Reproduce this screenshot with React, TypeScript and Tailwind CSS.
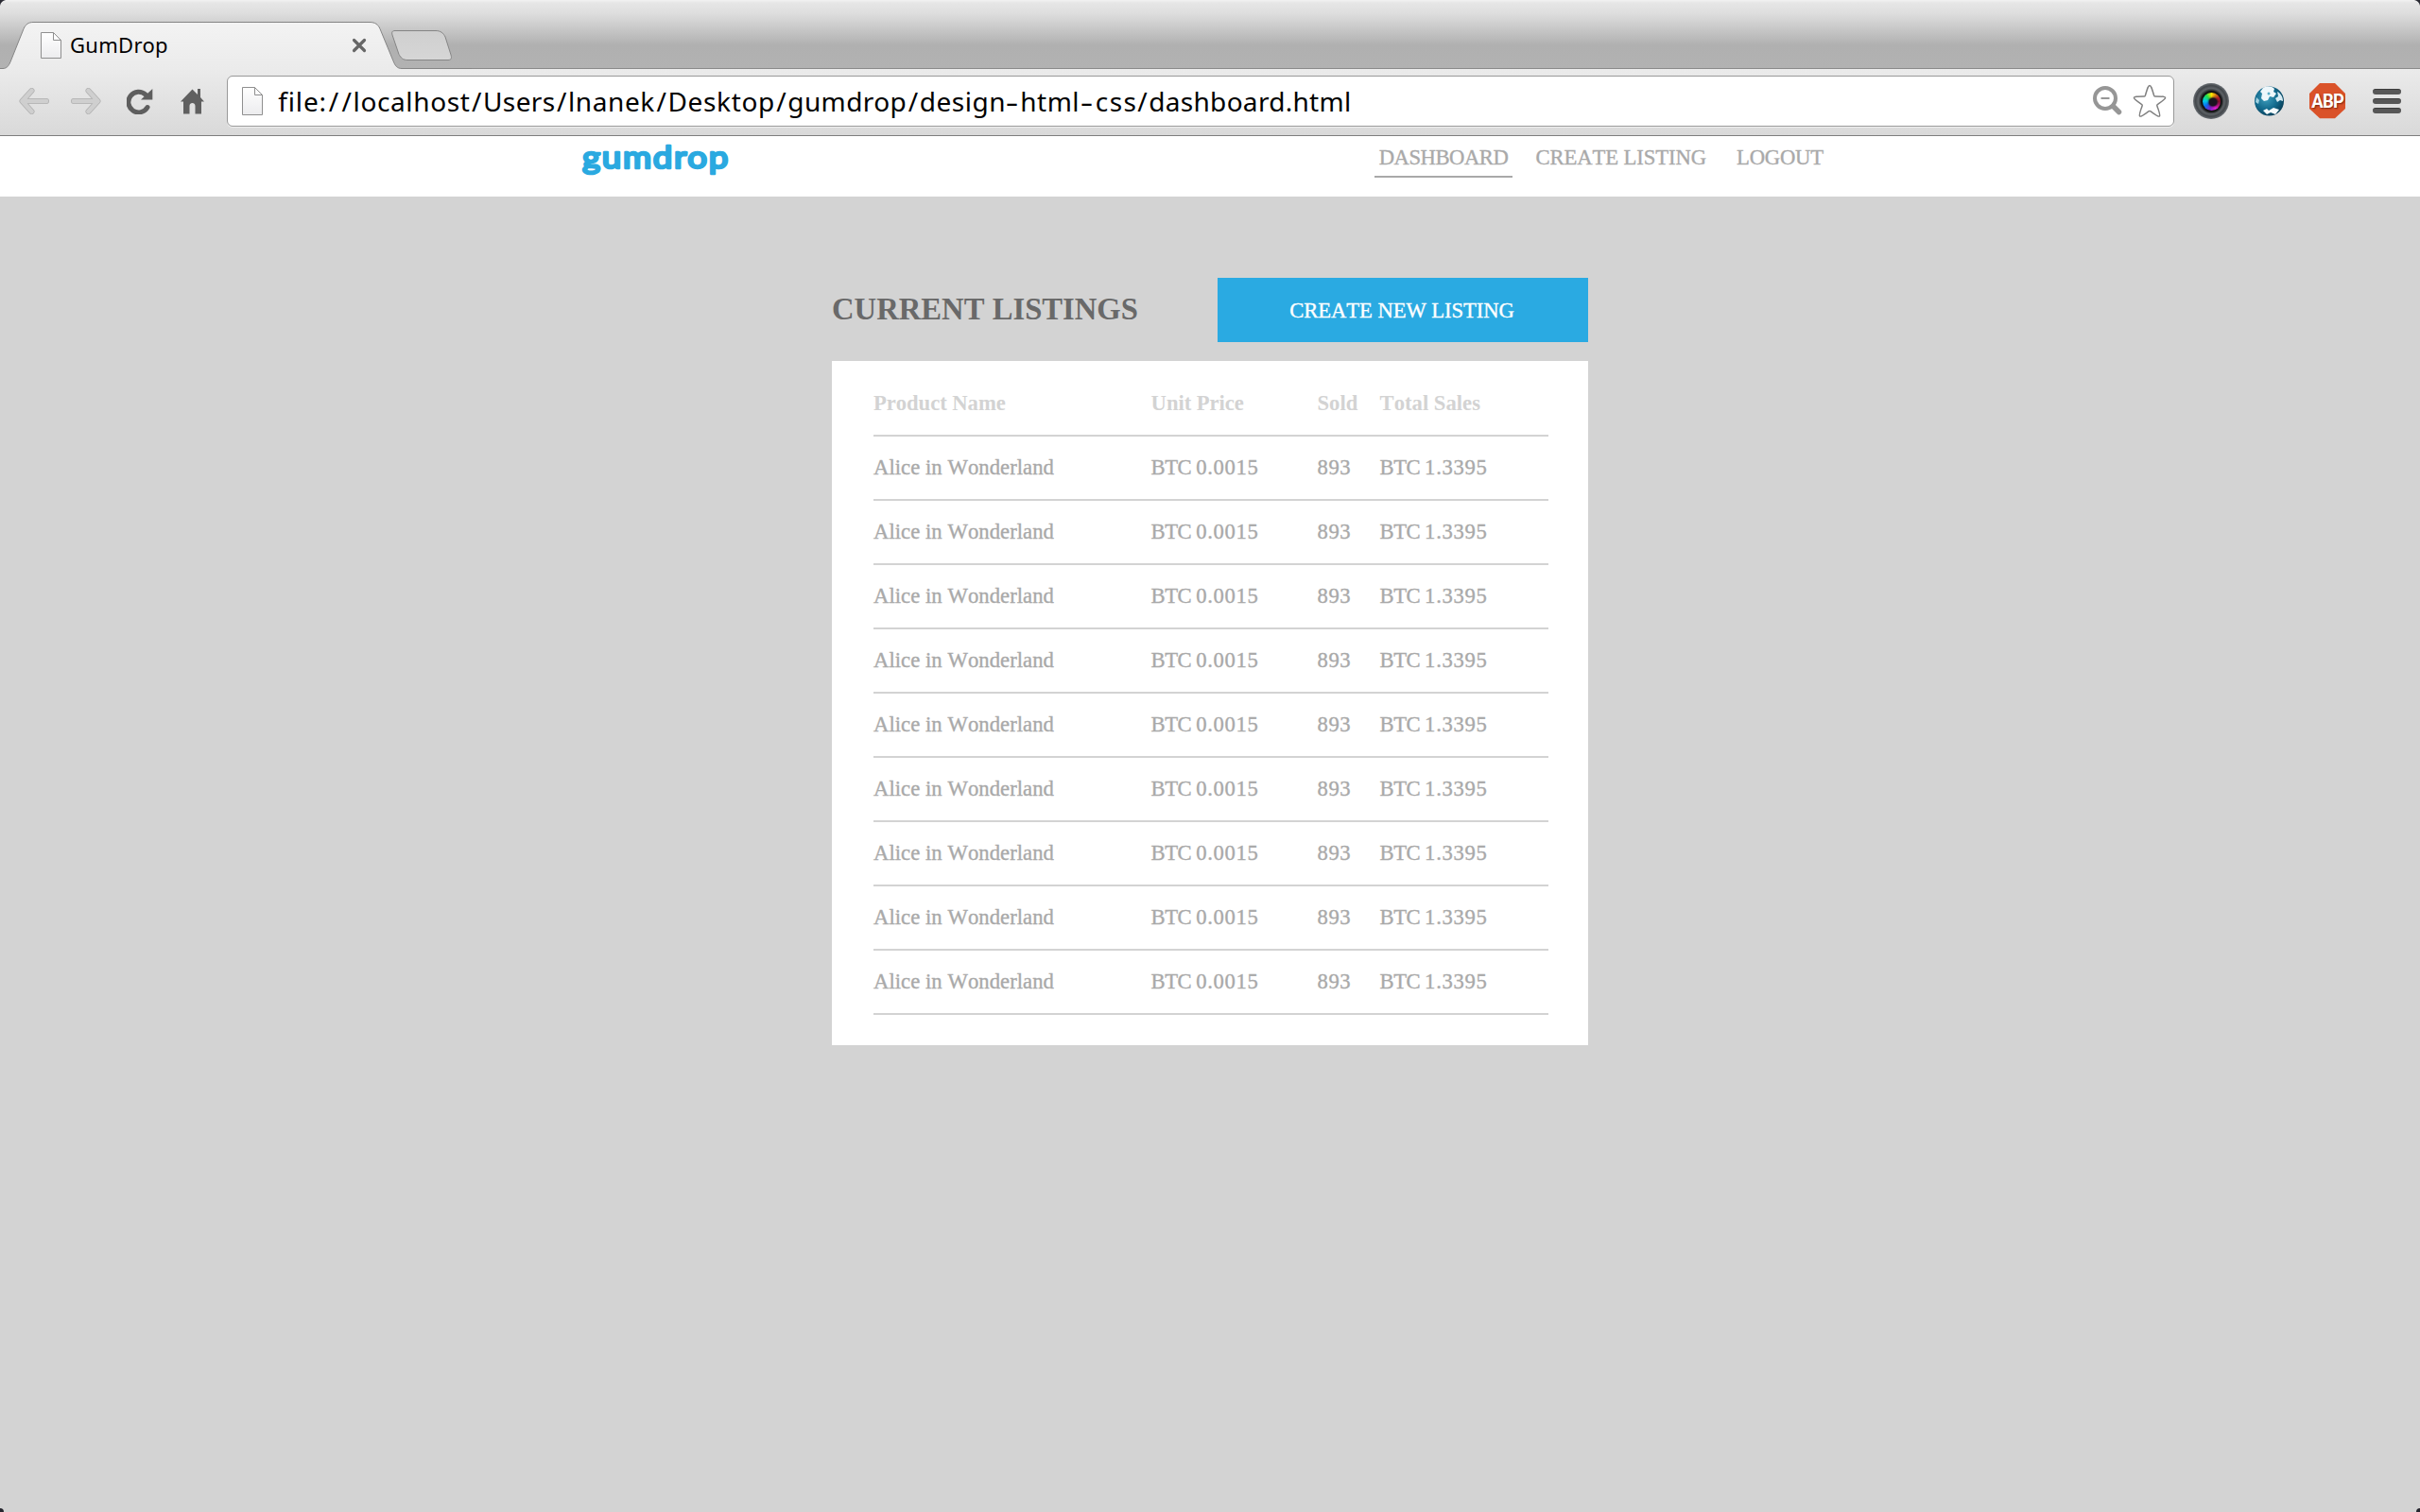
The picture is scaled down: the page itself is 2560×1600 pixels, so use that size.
const urlParts: { text: string; cls: string }[] = [
  { text: 'file:', cls: 'w-[51.7px] tracking-[0.86px]' },
  { text: '/', cls: 'w-[13.8px] text-center' },
  { text: '/', cls: 'w-[13.8px] text-center' },
  { text: 'localhost', cls: 'w-[123.9px] tracking-[0.62px]' },
  { text: '/', cls: 'w-[13.5px] text-center' },
  { text: 'Users', cls: 'w-[76.5px] tracking-[0.4px]' },
  { text: '/', cls: 'w-[13.5px] text-center' },
  { text: 'lnanek', cls: 'w-[92px] tracking-[0.6px]' },
  { text: '/', cls: 'w-[13.5px] text-center' },
  { text: 'Desktop', cls: 'w-[113.3px] tracking-[0.65px]' },
  { text: '/', cls: 'w-[13.5px] text-center' },
  { text: 'gumdrop', cls: 'w-[126px] tracking-[0.4px]' },
  { text: '/', cls: 'w-[13.5px] text-center' },
  { text: 'design', cls: 'w-[89.5px] tracking-[0.5px]' },
  { text: '-', cls: 'w-[17px] text-center scale-x-150' },
  { text: 'html', cls: 'w-[61.5px] tracking-[0.5px]' },
  { text: '-', cls: 'w-[17px] text-center scale-x-150' },
  { text: 'css', cls: 'w-[44px] pl-px tracking-[1.5px]' },
  { text: '/', cls: 'w-[13.5px] text-center' },
  { text: 'dashboard.html', cls: 'tracking-[0.3px]' },
];

const rows = Array.from({ length: 9 }, () => ({
  name: 'Alice in Wonderland',
  price: '0.0015',
  sold: '893',
  total: '1.3395',
}));

function PageIcon({ className, height }: { className: string; height: number }) {
  return (
    <svg className={className} width="22" height={height} viewBox={`0 0 22 ${height}`} fill="none">
      <defs>
        <linearGradient id="page" x1="0" y1="0" x2="0" y2="1">
          <stop offset="0" stopColor="#ffffff" />
          <stop offset="1" stopColor="#ececee" />
        </linearGradient>
      </defs>
      <path d={`M.5 .5H13.5L21.5 8.5V${height - 0.5}H.5Z`} fill="url(#page)" stroke="#8f8f8f" />
      <path d="M13.5 .5V8.5H21.5" stroke="#8f8f8f" />
    </svg>
  );
}

function TabStrip() {
  return (
    <div className="relative flex h-[73px] items-center bg-[linear-gradient(to_bottom,#f2f2f2_0px,#e6e6e6_3px,#dedede_14px,#cbcbcb_28px,#b0b0b0_48px,#b2b2b2_72px)]">
      <svg className="absolute top-0 left-0" width="500" height="73" viewBox="0 0 500 73" fill="none">
        <defs>
          <linearGradient id="tab" x1="0" y1="24" x2="0" y2="73" gradientUnits="userSpaceOnUse">
            <stop offset="0" stopColor="#f3f3f3" />
            <stop offset="1" stopColor="#ebebeb" />
          </linearGradient>
          <linearGradient id="newtab" x1="0" y1="33" x2="0" y2="63" gradientUnits="userSpaceOnUse">
            <stop offset="0" stopColor="#cfcfcf" />
            <stop offset="1" stopColor="#d6d6d6" />
          </linearGradient>
        </defs>
        <path
          d="M0 72.5H3C7 72.5 9 70 11 65.500L25 30.500C27 26 30 23.500 35 23.500H391C397 23.500 400 26 402 30.500L416 64.500C418 69.500 420 72.500 425 72.500V74H0Z"
          fill="url(#tab)"
        />
        <path
          d="M0 72.500H3C7 72.500 9 70 11 65.500L25 30.500C27 26 30 23.500 35 23.500H391C397 23.500 400 26 402 30.500L416 64.500C418 69.500 420 72.500 425 72.500H500"
          stroke="#858585"
        />
        <path
          d="M418 32.500H461C466 32.500 469 35 471 39L477 58C478 61.500 477.500 63.500 474 63.500H431C426 63.500 424 61 422 57.500L415 37C414 34 415 32.500 418 32.500Z"
          fill="url(#newtab)"
          stroke="#858585"
        />
      </svg>
      <div className="absolute right-0 bottom-0 left-[499px] h-px bg-[#8a8a8a]" />
      <div className="relative mt-[22px] flex h-[50px] items-center pl-[43px]">
        <PageIcon className="mt-px" height={28} />
        <div className="mb-0.5 ml-[9px] w-[298px] text-[22px] leading-[46px] tracking-[0.3px] text-black">GumDrop</div>
        <svg width="16" height="16" viewBox="0 0 16 16" fill="none" stroke="#666" strokeWidth="3.2">
          <path d="M2.5 2.500L13.500 13.500M13.500 2.500L2.500 13.500" strokeLinecap="round" />
        </svg>
      </div>
      <svg className="absolute top-0 left-0" width="6" height="6" viewBox="0 0 6 6">
        <path d="M0 0H6C3 .5 .5 3 0 6Z" fill="#2a2a33" />
      </svg>
      <svg className="absolute top-0 right-0" width="6" height="6" viewBox="0 0 6 6">
        <path d="M6 0H0C3 .5 5.500 3 6 6Z" fill="#2a2a33" />
      </svg>
    </div>
  );
}

function ArrowIcon({ flip }: { flip?: boolean }) {
  return (
    <svg width="32" height="28" viewBox="0 0 32 28" fill="none" className={flip ? 'ml-[23px] -scale-x-100' : ''}>
      <path d="M13.500 3L3.500 14L13.500 25M4 14H29" stroke="#b0b0b0" strokeWidth="6" strokeLinecap="round" strokeLinejoin="round" />
      <path d="M13.500 3L3.500 14L13.500 25M4 14H29" stroke="#cfcfcf" strokeWidth="4.500" strokeLinecap="round" strokeLinejoin="round" />
    </svg>
  );
}

function Toolbar() {
  return (
    <div className="flex h-[71px] items-center border-b border-[#7d7d7d] bg-linear-to-b from-[#ebebeb] to-[#d9d9d9] pb-[2px] pl-5">
      <ArrowIcon />
      <ArrowIcon flip />
      <svg width="28" height="28" viewBox="0 0 28 28" fill="none" className="ml-[27px]">
        <path d="M20 7.200A10.800 10.800 0 1 0 22 20.500" stroke="#5e5e5e" strokeWidth="5" strokeLinecap="round" />
        <path d="M27.300 1V12.500H15Z" fill="#5e5e5e" />
      </svg>
      <svg width="25" height="28" viewBox="0 0 25 28" fill="#606060" className="ml-[29px]">
        <path d="M12.500 1.500L18 7V1H21V10L25 14.500H22V27.500H15.500V19C15.500 15 9.500 15 9.500 19V27.500H3V14.500H0Z" />
      </svg>
      <div className="ml-6 flex h-[54px] w-[2060px] items-center rounded-[6px] border border-[#999] bg-white shadow-[0_1px_0_#efefef]">
        <PageIcon className="ml-[15px] shrink-0" height={30} />
        <div className="ml-[16.300px] flex grow text-[28px] leading-[52px] text-black">
          {urlParts.map((p, i) => (
            <span key={i} className={'inline-block shrink-0 whitespace-nowrap ' + p.cls}>
              {p.text}
            </span>
          ))}
        </div>
        <svg width="32" height="32" viewBox="0 0 32 32" fill="none" stroke="#969696" className="shrink-0">
          <circle cx="13" cy="13" r="11" strokeWidth="4" />
          <path d="M21.500 21.500L27.500 27.500" strokeWidth="5.500" strokeLinecap="round" />
          <path d="M8.500 13H17.500" strokeWidth="2" />
        </svg>
        <svg width="36" height="36" viewBox="0 0 36 36" fill="none" stroke="#808080" strokeWidth="1.500" strokeLinejoin="round" className="mr-[7px] ml-[10px] shrink-0">
          <path d="M18 1.500C19.500 1.500 20.200 4 22.600 12C22.700 12.600 23 12.900 23.600 12.900C32 13 34.600 13 34.600 14.500C34.600 16 32 17.600 26.300 21.500C25.800 21.900 25.700 22.400 25.900 22.900C28.400 30.500 29.600 33 28.400 34C27.200 34.900 25 33 18.700 28.600C18.200 28.300 17.800 28.300 17.300 28.600C11 33 8.800 34.900 7.600 34C6.400 33 7.600 30.500 10.100 22.900C10.300 22.400 10.200 21.900 9.700 21.500C4 17.600 1.400 16 1.400 14.500C1.400 13 4 13 12.400 12.900C13 12.900 13.300 12.600 13.400 12C15.800 4 16.500 1.500 18 1.500Z" />
        </svg>
      </div>
      <LensIcon />
      <GlobeIcon />
      <div className="ml-[26px] flex h-[38px] w-[38px] items-center justify-center bg-[#da5229] font-['Roboto'] text-[21px] leading-none font-bold text-white [clip-path:polygon(29%_0,71%_0,100%_29%,100%_71%,71%_98%,29%_98%,0_71%,0_29%)] [text-shadow:1px_1px_2px_#7a2410]">
        <span className="scale-x-[0.88] tracking-[-0.8px]">ABP</span>
      </div>
      <div className="ml-[29px] flex flex-col gap-1">
        {[0, 1, 2].map((i) => (
          <div key={i} className="h-1.5 w-[30px] rounded-[3px] border-t border-[#3c3c3c] bg-[#575757]" />
        ))}
      </div>
    </div>
  );
}

function LensIcon() {
  return (
    <div className="ml-5 flex h-[38px] w-[38px] items-center justify-center rounded-full bg-[radial-gradient(circle_closest-side,#111_50%,#3c4044_60%,#5f6468_72%,#43474b_86%,#6b7075_100%)]">
      <div className="flex h-[19px] w-[19px] items-center justify-center rounded-full bg-[conic-gradient(from_0deg,#ffe600,#b3202a_60deg,#8a1030_90deg,#e61ed2_150deg,#7b21c9_190deg,#0b6cf0_235deg,#00c8e8_275deg,#22e04a_320deg,#ffe600)] shadow-[0_0_2px_2px_#111]">
        <div className="mt-0.5 ml-1 h-[8px] w-[8px] rounded-full bg-[#1a1420] shadow-[0_0_2px_1px_#1a1420]" />
      </div>
    </div>
  );
}

function GlobeIcon() {
  return (
    <svg width="32" height="34" viewBox="0 0 32 34" className="ml-[27px]">
      <defs>
        <radialGradient id="globe" cx="0.4" cy="0.4" r="0.65">
          <stop offset="0" stopColor="#3f9fbe" />
          <stop offset="0.6" stopColor="#12698c" />
          <stop offset="1" stopColor="#0a3e57" />
        </radialGradient>
      </defs>
      <circle cx="15.500" cy="17" r="15.500" fill="url(#globe)" />
      <path d="M9 3C13 1 18 1 21 4L20 7L23 9L20 13L16 12L14 16L10 17L7 14L8 9L6 7Z" fill="#eef7fb" />
      <path d="M24 7C28 9 30 13 30 17L27 16L24 18L22 14L25 12Z" fill="#d7ebf3" />
      <path d="M9 27L13 25L15 27L20 24L26 26L22 31L17 29L13 31Z" fill="#f4fafc" />
      <path d="M2 13L5 16L4 20L1 18Z" fill="#9fd0e0" />
      <circle cx="15" cy="9" r="1.500" fill="#5badc8" />
    </svg>
  );
}

function SiteHeader() {
  return (
    <div className="flex h-16 items-start bg-white pl-[610px] font-['Liberation_Serif',serif] text-[22.670px] leading-[45px] text-[#a9a9a9]">
      <svg width="170" height="50" viewBox="0 0 170 50" className="shrink-0">
        <text
          x="6"
          y="34"
          textLength="156"
          lengthAdjust="spacingAndGlyphs"
          fontFamily="Lato"
          fontSize="33"
          letterSpacing="1.5"
          fill="#2aa9e0"
          stroke="#2aa9e0"
          strokeWidth="2.600"
          strokeLinejoin="round"
          strokeLinecap="round"
        >
          gumdrop
        </text>
      </svg>
      <nav className="ml-[674px] flex whitespace-nowrap [-webkit-text-stroke:0.35px_#a9a9a9] [font-kerning:none]">
        <a className="flex h-11 w-[146px] justify-center border-b-2 border-[#a9a9a9] tracking-[-0.5px]">DASHBOARD</a>
        <a className="ml-[24.500px] w-[182px] tracking-[-0.1px]">CREATE LISTING</a>
        <a className="ml-[30.500px] tracking-[-0.200px]">LOGOUT</a>
      </nav>
    </div>
  );
}

function Btc({ amount }: { amount: string }) {
  return (
    <span>
      <span className="tracking-[-0.550px]">BTC </span>
      <span className="tracking-[0.7px]">{amount}</span>
    </span>
  );
}

function Listings() {
  const grid = 'grid h-[68px] grid-cols-[293.600px_175.900px_66.100px_1fr] items-center border-b-2 border-[#d3d3d3]';
  return (
    <main className="mx-auto w-[800px] pt-[86px] font-['Liberation_Serif',serif] text-[22.670px] [font-kerning:none]">
      <div className="flex h-[68px] items-center justify-between">
        <h1 className="mb-px text-[32.670px] leading-none font-bold text-[#696969]">CURRENT LISTINGS</h1>
        <button className="h-[68px] w-[392px] bg-[#2aaae2] pt-[2px] pr-[2px] tracking-[-0.1px] text-white [-webkit-text-stroke:0.35px_white]">
          CREATE NEW LISTING
        </button>
      </div>
      <div className="mt-5 bg-white pt-3 pr-[42px] pb-8 pl-11 text-[#a9a9a9]">
        <div className={grid + ' font-bold text-[#d3d3d3]'}>
          <span className="tracking-[-0.050px]">Product Name</span>
          <span className="tracking-[-0.050px]">Unit Price</span>
          <span>Sold</span>
          <span>Total Sales</span>
        </div>
        {rows.map((r, i) => (
          <div key={i} className={grid + ' [-webkit-text-stroke:0.35px_#a9a9a9]'}>
            <span className="tracking-[0.050px]">{r.name}</span>
            <Btc amount={r.price} />
            <span className="tracking-[0.600px]">{r.sold}</span>
            <Btc amount={r.total} />
          </div>
        ))}
      </div>
    </main>
  );
}

export default function App() {
  return (
    <div className="relative h-[1600px] w-[2560px] overflow-hidden bg-[#d3d3d3] font-['Noto_Sans',sans-serif]">
      <TabStrip />
      <Toolbar />
      <SiteHeader />
      <Listings />
      <div className="absolute bottom-0 left-0 h-1 w-1 rounded-tr bg-[#26262e]" />
      <div className="absolute right-0 bottom-0 h-1 w-1 rounded-tl bg-[#26262e]" />
    </div>
  );
}
